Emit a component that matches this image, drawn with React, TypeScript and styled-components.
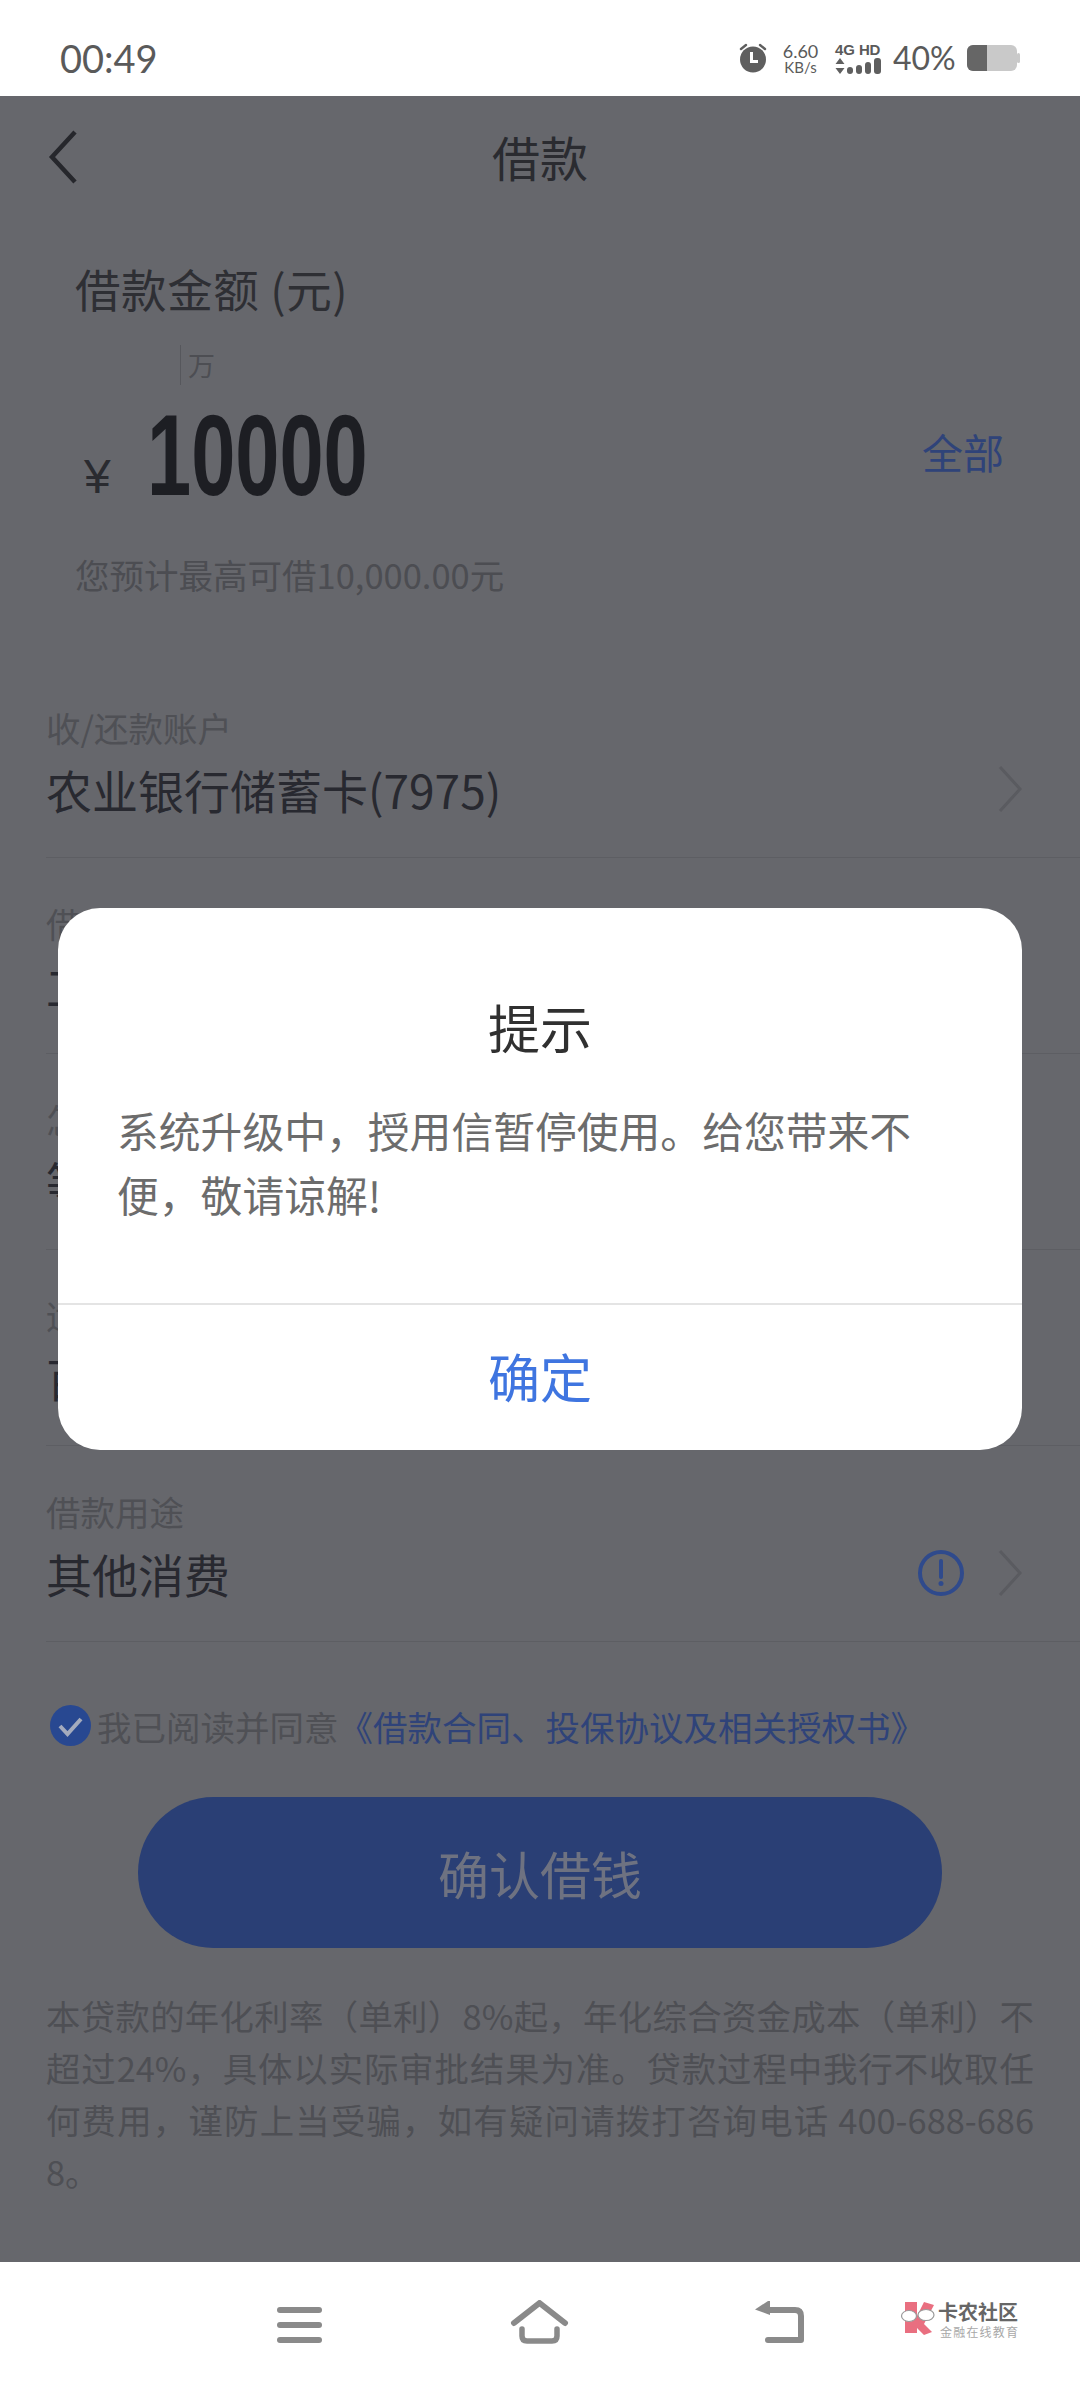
import React from "react";
import styled, { createGlobalStyle } from "styled-components";

const cjk = `"Noto Sans CJK SC", "Noto Sans", sans-serif`;

const Global = createGlobalStyle`
  html, body { margin: 0; padding: 0; background: #fff; }
  * { box-sizing: border-box; }
  #root { width: 1080px; height: 2388px; overflow: hidden; }
`;

const Page = styled.div`
  position: relative;
  width: 1080px;
  height: 2388px;
  display: flex;
  flex-direction: column;
  font-family: ${cjk};
  font-weight: 400;
  background: #fff;
`;

const StatusBar = styled.div`
  height: 96px;
  flex: none;
  display: flex;
  align-items: center;
  justify-content: space-between;
  padding: 20px 60px 0;
  background: #fff;
  color: #5a5a5a;
  font-family: Lato, sans-serif;
`;

const Time = styled.div`
  font-size: 38px;
  line-height: 46px;
`;

const StatusIcons = styled.div`
  display: flex;
  align-items: center;
`;

const Speed = styled.div`
  width: 37px;
  margin-left: 14px;
  text-align: center;
  font-family: Lato, sans-serif;
  display: flex;
  flex-direction: column;
  align-items: center;
  white-space: nowrap;
`;

const SpeedValue = styled.span`
  font-size: 18px;
  line-height: 18px;
`;

const SpeedUnit = styled.span`
  font-size: 15px;
  line-height: 14px;
`;

const Network = styled.div`
  width: 47px;
  margin-left: 16px;
  display: flex;
  flex-direction: column;
  gap: 2px;
`;

const NetworkLabel = styled.span`
  font-family: "Liberation Sans", sans-serif;
  font-weight: 700;
  font-size: 15px;
  line-height: 13px;
  letter-spacing: -0.1px;
  white-space: nowrap;
`;

const Percent = styled.div`
  margin-left: 11px;
  width: 62px;
  font-size: 32px;
  line-height: 40px;
  white-space: nowrap;
`;

const BatteryIcon = styled.svg`
  margin-left: 12px;
  display: block;
`;

const Main = styled.main`
  flex: 1;
  min-height: 0;
  background: #66676c;
  display: flex;
  flex-direction: column;
`;

const NavBar = styled.div`
  position: relative;
  height: 122px;
  flex: none;
  display: flex;
  align-items: center;
  justify-content: center;
`;

const BackIcon = styled.svg`
  position: absolute;
  left: 48px;
  top: 34px;
`;

const NavTitle = styled.h1`
  margin: -2px 0 0;
  font-size: 48px;
  line-height: 60px;
  font-weight: 400;
  color: #2a2b30;
`;

const Hero = styled.section`
  height: 444px;
  flex: none;
  padding: 40px 76px 0;
  display: flex;
  flex-direction: column;
`;

const HeroLabel = styled.div`
  font-size: 45.5px;
  line-height: 60px;
  letter-spacing: 0.6px;
  margin-left: -1px;
  color: #2e2f34;
`;

const Unit = styled.div`
  margin: 27px 0 0 104px;
  width: 40px;
  height: 40px;
  border-left: 1px solid #56575c;
  padding-left: 7px;
  font-size: 27px;
  line-height: 40px;
  color: #4d4e53;
`;

const AmountRow = styled.div`
  margin-top: 10px;
  height: 120px;
  display: flex;
  align-items: flex-start;
`;

const Currency = styled.span`
  width: 71px;
  margin-top: 54px;
  padding-left: 8px;
  font-family: "Liberation Sans", sans-serif;
  font-size: 48px;
  line-height: 56px;
  color: #2a2b30;
`;

const Amount = styled.span`
  display: block;
  width: 220px;
  font-family: "Liberation Sans", sans-serif;
  font-weight: 700;
  font-size: 115px;
  line-height: 120px;
  color: #1d1e23;
  transform: scaleX(0.69);
  transform-origin: left center;
`;

const AllLink = styled.span`
  margin: -4px 0 0 auto;
  font-size: 41px;
  line-height: 120px;
  color: #2f4379;
`;

const Hint = styled.div`
  margin: 34px 0 0 -1px;
  font-size: 34.5px;
  line-height: 50px;
  color: #4c4d52;
  white-space: nowrap;
`;

const Row = styled.div`
  height: 196px;
  flex: none;
  margin-left: 46px;
  padding: 40px 58px 0 0;
  border-bottom: 1px solid #5d5e63;
`;

const RowLabel = styled.div`
  font-size: 34.5px;
  line-height: 50px;
  color: #4f5055;
`;

const RowValueLine = styled.div`
  display: flex;
  align-items: center;
  height: 60px;
  margin-top: 7px;
`;

const RowValue = styled.div`
  font-size: 46px;
  line-height: 60px;
  color: #282930;
`;

const InfoIcon = styled.svg`
  margin-left: auto;
  display: block;
`;

const Chevron = styled.svg<{ $push?: boolean }>`
  display: block;
  margin-left: ${(p) => (p.$push ? "auto" : "34px")};
`;

const Agreement = styled.div`
  margin-top: 58px;
  padding-left: 50px;
  height: 50px;
  display: flex;
  align-items: center;
  font-size: 34.5px;
  line-height: 50px;
  color: #4f5055;
  white-space: nowrap;
`;

const AgreementText = styled.span`
  margin-top: 2px;
`;

const CheckIcon = styled.svg`
  display: block;
  margin-right: 6px;
  flex: none;
`;

const AgreementLink = styled.span`
  color: #2f4379;
`;

const ConfirmButton = styled.div`
  margin: 47px 0 0 138px;
  width: 804px;
  height: 151px;
  flex: none;
  border-radius: 76px;
  background: #2a3f75;
  color: #6e7281;
  display: flex;
  align-items: center;
  justify-content: center;
  font-size: 51px;
`;

const Disclaimer = styled.p`
  margin: 41px 0 0;
  padding: 0 46px;
  font-size: 34.4px;
  line-height: 52px;
  color: #4e4f54;
  word-break: break-all;
  text-align: justify;
`;

const Footer = styled.footer`
  height: 126px;
  flex: none;
  background: #fff;
  display: flex;
  align-items: flex-start;
  padding: 38px 0 0 277px;
`;

const NavSvg = styled.svg<{ $gap: number }>`
  display: block;
  flex: none;
  margin-left: ${(p) => p.$gap}px;
`;

const Watermark = styled.div`
  margin: 0 0 0 95px;
  display: flex;
  align-items: flex-start;
`;

const WatermarkText = styled.div`
  margin-left: 1px;
  display: flex;
  flex-direction: column;
`;

const WatermarkTitle = styled.span`
  font-weight: 700;
  font-size: 20px;
  line-height: 24px;
  color: #666;
  white-space: nowrap;
`;

const WatermarkSub = styled.span`
  margin: 1px 0 0 2px;
  font-size: 12px;
  line-height: 14px;
  letter-spacing: 1.2px;
  color: #a8a8a8;
  white-space: nowrap;
`;

const Dialog = styled.div`
  position: absolute;
  left: 58px;
  top: 908px;
  width: 964px;
  height: 542px;
  background: #fff;
  border-radius: 42px;
  display: flex;
  flex-direction: column;
  overflow: hidden;
`;

const DialogBody = styled.div`
  height: 397px;
  flex: none;
  padding: 84px 59px 0;
  border-bottom: 2px solid #e4e4e4;
`;

const DialogTitle = styled.div`
  font-size: 52px;
  line-height: 70px;
  color: #303030;
  text-align: center;
`;

const DialogText = styled.div`
  margin-top: 36px;
  font-size: 41.8px;
  line-height: 64px;
  color: #6c6c6c;
`;

const DialogAction = styled.div`
  flex: 1;
  display: flex;
  align-items: center;
  justify-content: center;
  padding-bottom: 4px;
  font-size: 52px;
  color: #3f75e0;
`;

const RowChevron = ({ push }: { push?: boolean }) => (
  <Chevron $push={push} width="24" height="48" viewBox="0 0 24 48" fill="none">
    <path d="M2 2l20 22L2 46" stroke="#5a5b60" strokeWidth="3" />
  </Chevron>
);

const rows = [
  { label: "收/还款账户", value: "农业银行储蓄卡(7975)" },
  { label: "借款期限", value: "工商银行" },
  { label: "怎么还", value: "等额本息" },
  { label: "适用利率", value: "百分比" },
];

export default function App() {
  return (
    <Page>
      <Global />
      <StatusBar>
        <Time>00:49</Time>
        <StatusIcons>
          <svg width="30" height="30" viewBox="0 0 30 30" style={{ display: "block" }}>
            <circle cx="15" cy="16.5" r="13" fill="#5f5f5f" />
            <path d="M3 6l5-4M27 6l-5-4" stroke="#5f5f5f" strokeWidth="2.4" strokeLinecap="round" />
            <path d="M13.5 9v9.5H20" stroke="#fff" strokeWidth="3" fill="none" />
          </svg>
          <Speed>
            <SpeedValue>6.60</SpeedValue>
            <SpeedUnit>KB/s</SpeedUnit>
          </Speed>
          <Network>
            <NetworkLabel>4G HD</NetworkLabel>
            <svg width="47" height="16" viewBox="0 0 47 16" style={{ display: "block" }}>
              <path d="M5 0l4.500 6h-9zM5 16l4.500-6h-9z" fill="#5f5f5f" />
              <rect x="12" y="9" width="6" height="7" rx="3" fill="#5f5f5f" />
              <rect x="21" y="7" width="6" height="9" rx="3" fill="#5f5f5f" />
              <rect x="30" y="4" width="6" height="12" rx="3" fill="#5f5f5f" />
              <rect x="39" y="0" width="7" height="16" rx="3" fill="#5f5f5f" />
            </svg>
          </Network>
          <Percent>40%</Percent>
          <BatteryIcon width="53" height="26" viewBox="0 0 53 26">
            <rect x="0" y="0" width="50" height="26" rx="6" fill="#c9c9c9" />
            <path d="M6 0h14v26H6a6 6 0 0 1-6-6V6a6 6 0 0 1 6-6z" fill="#666" />
            <rect x="50" y="8" width="3" height="10" rx="1.500" fill="#c9c9c9" />
          </BatteryIcon>
        </StatusIcons>
      </StatusBar>
      <Main>
        <NavBar>
          <BackIcon width="30" height="54" viewBox="0 0 30 54" fill="none">
            <path d="M27 2L4 27l23 25" stroke="#26272c" strokeWidth="4.500" />
          </BackIcon>
          <NavTitle>借款</NavTitle>
        </NavBar>
        <Hero>
          <HeroLabel>借款金额 (元)</HeroLabel>
          <Unit>万</Unit>
          <AmountRow>
            <Currency>¥</Currency>
            <Amount>10000</Amount>
            <AllLink>全部</AllLink>
          </AmountRow>
          <Hint>您预计最高可借10,000.00元</Hint>
        </Hero>
        {rows.map((r) => (
          <Row key={r.label}>
            <RowLabel>{r.label}</RowLabel>
            <RowValueLine>
              <RowValue>{r.value}</RowValue>
              <RowChevron push />
            </RowValueLine>
          </Row>
        ))}
        <Row>
          <RowLabel>借款用途</RowLabel>
          <RowValueLine>
            <RowValue>其他消费</RowValue>
            <InfoIcon width="46" height="46" viewBox="0 0 46 46" fill="none">
              <circle cx="23" cy="23" r="21" stroke="#2f4a8c" strokeWidth="4" />
              <path d="M23 11v16" stroke="#2f4a8c" strokeWidth="4" strokeLinecap="round" />
              <circle cx="23" cy="33.500" r="2.500" fill="#2f4a8c" />
            </InfoIcon>
            <RowChevron />
          </RowValueLine>
        </Row>
        <Agreement>
          <CheckIcon width="41" height="41" viewBox="0 0 41 41" fill="none">
            <circle cx="20.500" cy="20.500" r="20.500" fill="#284891" />
            <path d="M10 21l7.500 8L31 14" stroke="#a4abbd" strokeWidth="4" />
          </CheckIcon>
          <AgreementText>
            我已阅读并同意
            <AgreementLink>《借款合同、投保协议及相关授权书》</AgreementLink>
          </AgreementText>
        </Agreement>
        <ConfirmButton>确认借钱</ConfirmButton>
        <Disclaimer>
          本贷款的年化利率（单利）8%起，年化综合资金成本（单利）不超过24%，具体以实际审批结果为准。贷款过程中我行不收取任何费用，谨防上当受骗，如有疑问请拨打咨询电话 400-688-6868。
        </Disclaimer>
      </Main>
      <Footer>
        <NavSvg $gap={0} width="45" height="40" viewBox="0 0 45 40" fill="#8a8a8a" style={{ marginTop: 7 }}>
          <rect x="0" y="0" width="45" height="6" rx="3" />
          <rect x="0" y="15" width="45" height="6" rx="3" />
          <rect x="0" y="30" width="45" height="6" rx="3" />
        </NavSvg>
        <NavSvg $gap={188} width="60" height="46" viewBox="0 0 60 46" fill="none" stroke="#8a8a8a" strokeLinecap="round" strokeLinejoin="round">
          <path d="M4 23L29.500 3 55 23" strokeWidth="6" />
          <path d="M12 29v7q0 5 5 5h25q5 0 5-5v-7" strokeWidth="5.500" />
        </NavSvg>
        <NavSvg $gap={185} width="50" height="44" viewBox="0 0 50 44" fill="none" style={{ marginTop: 1 }}>
          <path d="M0 8.500L13 0h2v14z" fill="#8a8a8a" />
          <path d="M12 9h28q6 0 6 6v24H13" stroke="#8a8a8a" strokeWidth="6" strokeLinecap="round" strokeLinejoin="round" />
        </NavSvg>
        <Watermark>
          <svg width="37" height="36" viewBox="0 0 37 36" fill="none" style={{ display: "block" }}>
            <path d="M5 2h12v14L24 2l10 3-10 19 8 8-8 3-7-7v5H5z" fill="#e96f80" />
            <ellipse cx="9" cy="16" rx="7.500" ry="5.500" fill="#fff" stroke="#9a9a9a" strokeWidth="1.200" />
            <ellipse cx="26" cy="15" rx="8" ry="5.500" fill="#fff" stroke="#9a9a9a" strokeWidth="1.200" />
          </svg>
          <WatermarkText>
            <WatermarkTitle>卡农社区</WatermarkTitle>
            <WatermarkSub>金融在线教育</WatermarkSub>
          </WatermarkText>
        </Watermark>
      </Footer>
      <Dialog>
        <DialogBody>
          <DialogTitle>提示</DialogTitle>
          <DialogText>系统升级中，授用信暂停使用。给您带来不便，敬请谅解!</DialogText>
        </DialogBody>
        <DialogAction>确定</DialogAction>
      </Dialog>
    </Page>
  );
}
